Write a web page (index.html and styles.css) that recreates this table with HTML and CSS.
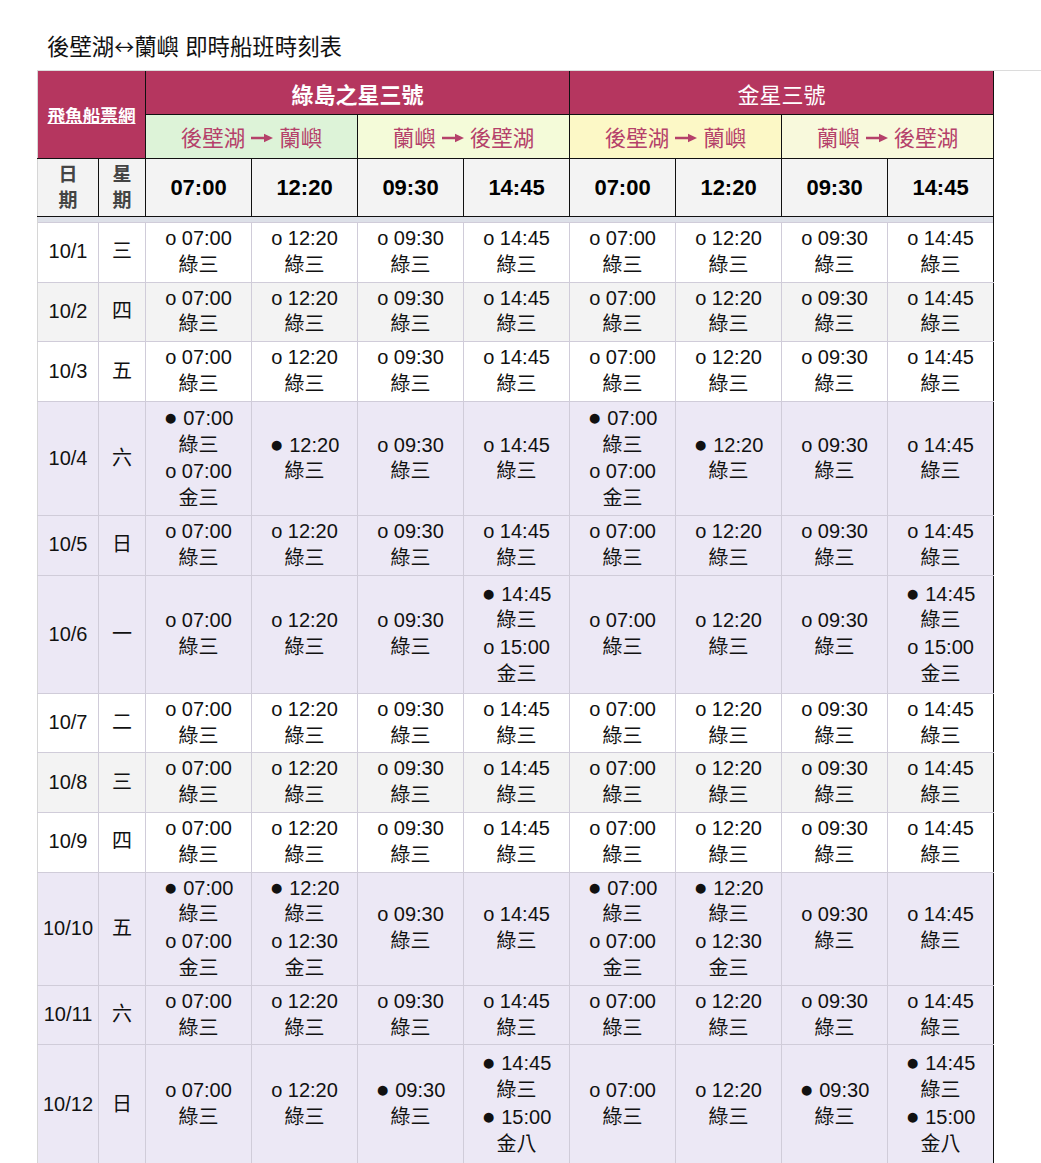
FILE: index.html
```html
<!DOCTYPE html>
<html lang="zh-Hant">
<head>
<meta charset="utf-8">
<title>後壁湖↔蘭嶼 即時船班時刻表</title>
<link rel="stylesheet" href="styles.css">
</head>
<body>
<div class="page">
  <h1 class="title">後壁湖<span class="lr">↔</span>蘭嶼 即時船班時刻表</h1>
  <div class="wrap">
    <table class="tt">
      <colgroup>
        <col class="c-date"><col class="c-wd">
        <col class="c-t"><col class="c-t"><col class="c-t"><col class="c-t">
        <col class="c-t"><col class="c-t"><col class="c-t"><col class="c-t">
      </colgroup>
      <thead>
        <tr class="h1">
          <th class="brand first" colspan="2" rowspan="2"><a href="#">飛魚船票網</a></th>
          <th class="ship bold" colspan="4">綠島之星三號</th>
          <th class="ship" colspan="4">金星三號</th>
        </tr>
        <tr class="h2">
          <th class="dir d1" colspan="2">後壁湖 <svg class="arr" viewBox="0 0 22 10" width="22" height="10"><path d="M0 3.7h14v2.6H0z M13 0.8L22 5L13 9.2z"/></svg> 蘭嶼</th>
          <th class="dir d2" colspan="2">蘭嶼 <svg class="arr" viewBox="0 0 22 10" width="22" height="10"><path d="M0 3.7h14v2.6H0z M13 0.8L22 5L13 9.2z"/></svg> 後壁湖</th>
          <th class="dir d3" colspan="2">後壁湖 <svg class="arr" viewBox="0 0 22 10" width="22" height="10"><path d="M0 3.7h14v2.6H0z M13 0.8L22 5L13 9.2z"/></svg> 蘭嶼</th>
          <th class="dir d4" colspan="2">蘭嶼 <svg class="arr" viewBox="0 0 22 10" width="22" height="10"><path d="M0 3.7h14v2.6H0z M13 0.8L22 5L13 9.2z"/></svg> 後壁湖</th>
        </tr>
        <tr class="h3">
          <th class="lbl first">日<br>期</th>
          <th class="lbl">星<br>期</th>
          <th class="tm">07:00</th><th class="tm">12:20</th><th class="tm">09:30</th><th class="tm">14:45</th>
          <th class="tm">07:00</th><th class="tm">12:20</th><th class="tm">09:30</th><th class="tm">14:45</th>
        </tr>
      </thead>
      <tbody>
        <tr class="gap"><td colspan="10"></td></tr>

        <tr class="wk">
          <td class="first">10/1</td><td>三</td>
          <td class="g">o 07:00<br>綠三</td><td>o 12:20<br>綠三</td><td>o 09:30<br>綠三</td><td>o 14:45<br>綠三</td>
          <td class="g">o 07:00<br>綠三</td><td>o 12:20<br>綠三</td><td>o 09:30<br>綠三</td><td class="last">o 14:45<br>綠三</td>
        </tr>
        <tr class="alt">
          <td class="first">10/2</td><td>四</td>
          <td class="g">o 07:00<br>綠三</td><td>o 12:20<br>綠三</td><td>o 09:30<br>綠三</td><td>o 14:45<br>綠三</td>
          <td class="g">o 07:00<br>綠三</td><td>o 12:20<br>綠三</td><td>o 09:30<br>綠三</td><td class="last">o 14:45<br>綠三</td>
        </tr>
        <tr class="wk">
          <td class="first">10/3</td><td>五</td>
          <td class="g">o 07:00<br>綠三</td><td>o 12:20<br>綠三</td><td>o 09:30<br>綠三</td><td>o 14:45<br>綠三</td>
          <td class="g">o 07:00<br>綠三</td><td>o 12:20<br>綠三</td><td>o 09:30<br>綠三</td><td class="last">o 14:45<br>綠三</td>
        </tr>
        <tr class="hol mid">
          <td class="first">10/4</td><td>六</td>
          <td class="g"><span class="dot">●</span> 07:00<br>綠三<br>o 07:00<br>金三</td><td><span class="dot">●</span> 12:20<br>綠三</td><td>o 09:30<br>綠三</td><td>o 14:45<br>綠三</td>
          <td class="g"><span class="dot">●</span> 07:00<br>綠三<br>o 07:00<br>金三</td><td><span class="dot">●</span> 12:20<br>綠三</td><td>o 09:30<br>綠三</td><td class="last">o 14:45<br>綠三</td>
        </tr>
        <tr class="hol">
          <td class="first">10/5</td><td>日</td>
          <td class="g">o 07:00<br>綠三</td><td>o 12:20<br>綠三</td><td>o 09:30<br>綠三</td><td>o 14:45<br>綠三</td>
          <td class="g">o 07:00<br>綠三</td><td>o 12:20<br>綠三</td><td>o 09:30<br>綠三</td><td class="last">o 14:45<br>綠三</td>
        </tr>
        <tr class="hol tall">
          <td class="first">10/6</td><td>一</td>
          <td class="g">o 07:00<br>綠三</td><td>o 12:20<br>綠三</td><td>o 09:30<br>綠三</td><td><span class="dot">●</span> 14:45<br>綠三<br>o 15:00<br>金三</td>
          <td class="g">o 07:00<br>綠三</td><td>o 12:20<br>綠三</td><td>o 09:30<br>綠三</td><td class="last"><span class="dot">●</span> 14:45<br>綠三<br>o 15:00<br>金三</td>
        </tr>
        <tr class="wk">
          <td class="first">10/7</td><td>二</td>
          <td class="g">o 07:00<br>綠三</td><td>o 12:20<br>綠三</td><td>o 09:30<br>綠三</td><td>o 14:45<br>綠三</td>
          <td class="g">o 07:00<br>綠三</td><td>o 12:20<br>綠三</td><td>o 09:30<br>綠三</td><td class="last">o 14:45<br>綠三</td>
        </tr>
        <tr class="alt">
          <td class="first">10/8</td><td>三</td>
          <td class="g">o 07:00<br>綠三</td><td>o 12:20<br>綠三</td><td>o 09:30<br>綠三</td><td>o 14:45<br>綠三</td>
          <td class="g">o 07:00<br>綠三</td><td>o 12:20<br>綠三</td><td>o 09:30<br>綠三</td><td class="last">o 14:45<br>綠三</td>
        </tr>
        <tr class="wk">
          <td class="first">10/9</td><td>四</td>
          <td class="g">o 07:00<br>綠三</td><td>o 12:20<br>綠三</td><td>o 09:30<br>綠三</td><td>o 14:45<br>綠三</td>
          <td class="g">o 07:00<br>綠三</td><td>o 12:20<br>綠三</td><td>o 09:30<br>綠三</td><td class="last">o 14:45<br>綠三</td>
        </tr>
        <tr class="hol">
          <td class="first">10/10</td><td>五</td>
          <td class="g"><span class="dot">●</span> 07:00<br>綠三<br>o 07:00<br>金三</td><td><span class="dot">●</span> 12:20<br>綠三<br>o 12:30<br>金三</td><td>o 09:30<br>綠三</td><td>o 14:45<br>綠三</td>
          <td class="g"><span class="dot">●</span> 07:00<br>綠三<br>o 07:00<br>金三</td><td><span class="dot">●</span> 12:20<br>綠三<br>o 12:30<br>金三</td><td>o 09:30<br>綠三</td><td class="last">o 14:45<br>綠三</td>
        </tr>
        <tr class="hol">
          <td class="first">10/11</td><td>六</td>
          <td class="g">o 07:00<br>綠三</td><td>o 12:20<br>綠三</td><td>o 09:30<br>綠三</td><td>o 14:45<br>綠三</td>
          <td class="g">o 07:00<br>綠三</td><td>o 12:20<br>綠三</td><td>o 09:30<br>綠三</td><td class="last">o 14:45<br>綠三</td>
        </tr>
        <tr class="hol tall">
          <td class="first">10/12</td><td>日</td>
          <td class="g">o 07:00<br>綠三</td><td>o 12:20<br>綠三</td><td><span class="dot">●</span> 09:30<br>綠三</td><td><span class="dot">●</span> 14:45<br>綠三<br><span class="dot">●</span> 15:00<br>金八</td>
          <td class="g">o 07:00<br>綠三</td><td>o 12:20<br>綠三</td><td><span class="dot">●</span> 09:30<br>綠三</td><td class="last"><span class="dot">●</span> 14:45<br>綠三<br><span class="dot">●</span> 15:00<br>金八</td>
        </tr>
      </tbody>
    </table>
  </div>
</div>
</body>
</html>
```

FILE: styles.css
```css
html, body {
  margin: 0;
  padding: 0;
  background: #ffffff;
}

body {
  font-family: "Liberation Sans", Arial, "Noto Sans CJK TC", sans-serif;
  color: #111;
}

.page {
  padding-top: 32px;
}

.title {
  margin: 0 0 7px 47px;
  font-size: 22.4px;
  line-height: 30px;
  font-weight: normal;
  color: #111;
}

.lr {
  font-family: "Noto Sans CJK TC", sans-serif;
  font-size: 20px;
}

.wrap {
  margin-left: 37px;
  border-top: 1px solid #dcdcdc;
}

.tt {
  border-collapse: collapse;
  table-layout: fixed;
  width: 956px;
}

.c-date { width: 61px; }
.c-wd { width: 47px; }
.c-t { width: 106px; }

.tt th {
  border: 1px solid #111;
  padding: 0;
  text-align: center;
  vertical-align: middle;
}

.tt tr.h1 th {
  border-top: none;
}

.tt th.first,
.tt td.first {
  border-left: 1px solid #d6d6d6;
}

.h1 th {
  height: 43px;
  background: #b5365f;
  color: #fff;
  font-size: 22px;
  font-weight: normal;
}

.h1 th.bold {
  font-weight: bold;
}

.brand a {
  color: #fff;
  font-size: 17.6px;
  font-weight: bold;
  text-decoration: underline;
}

.h2 th {
  height: 43px;
}

.dir {
  font-size: 21.5px;
  font-weight: normal;
  color: #b5416a;
}

.arr {
  fill: #b5416a;
  vertical-align: middle;
  position: relative;
  top: -2px;
}

.d1 { background: #ddf3d8; }
.d2 { background: #f4fbd9; }
.d3 { background: #fcf8c6; }
.d4 { background: #f8f9dc; }

.h3 th {
  height: 57px;
  background: #f3f3f3;
}

.tm {
  font-size: 22px;
  font-weight: bold;
  color: #000;
}

.lbl {
  font-size: 19px;
  font-weight: bold;
  color: #444;
  line-height: 26px;
}

.tt tr.gap td {
  height: 5px;
  padding: 0;
  background: #dde0e8;
  border: none;
  border-left: 1px solid #d6d6d6;
  border-right: 1px solid #111;
}

.tt td {
  border: 1px solid #d0ccd9;
  padding: 2px 1px 3px;
  text-align: center;
  vertical-align: middle;
  font-size: 20px;
  line-height: 26.8px;
  color: #111;
}

.tt tr.mid td {
  padding-top: 3px;
  padding-bottom: 3px;
}

.tt tr.tall td {
  padding-top: 5px;
  padding-bottom: 5px;
}

.tt td.g {
  border-left: 1px solid #111;
}

.tt td.last {
  border-right: 1px solid #111;
}

.wk td { background: #ffffff; }
.alt td { background: #f3f3f3; }
.hol td { background: #ece8f5; }

.dot {
  font-size: 23px;
  line-height: 0;
}
```
